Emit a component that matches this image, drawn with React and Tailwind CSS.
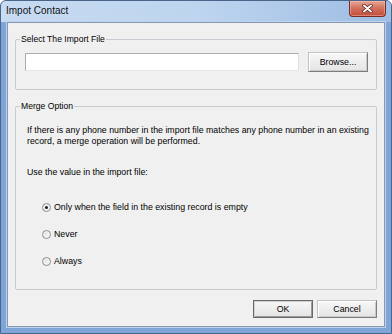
import React from "react";

function Radio({ checked, label }) {
  return (
    <div className="h-[12px] flex items-center">
      <span className="relative w-[9px] h-[9px] rounded-full border border-[#8a8c8e] bg-gradient-to-br from-[#d9dadb] to-[#ffffff] flex items-center justify-center shadow-[inset_0_0_0_1px_#f4f4f4]">
        {checked && <span className="w-[3px] h-[3px] rounded-full bg-[#1e1e1e]" />}
      </span>
      <span className="ml-[3px] text-[8.8px] leading-[12px]">{label}</span>
    </div>
  );
}

function Btn({ children, def, className = "" }) {
  return (
    <div
      className={
        "flex items-center justify-center text-[8.8px] leading-[10px] bg-gradient-to-b from-[#f7f7f7] to-[#e4e4e4] " +
        (def
          ? "border border-[#6a6a6a] shadow-[inset_1px_1px_0_#cfcfcf,inset_-1px_-1px_0_#9a9a9a] "
          : "border border-t-[#c2c2c2] border-l-[#c2c2c2] border-r-[#7d7d7d] border-b-[#7d7d7d] shadow-[inset_1px_1px_0_#ffffff,inset_-1px_-1px_0_#c9c9c9] ") +
        className
      }
    >
      {children}
    </div>
  );
}

export default function App() {
  return (
    <div className="w-[392px] h-[334px] flex flex-col bg-[#7ea4d8] border border-[#4a648a] rounded-t-[6px] overflow-hidden font-['Liberation_Sans',Arial,sans-serif] text-black">
      {/* title bar */}
      <div className="h-[21px] flex items-start justify-between pl-[5px] pr-[5px] bg-gradient-to-r from-[#c7dbf1] via-[#bed5ef] to-[#9dbde3]">
        <span className="mt-[4px] text-[10px] leading-[12px] text-[#111]">Impot Contact</span>
        <div className="w-[37px] h-[16px] rounded-b-[4px] border border-t-0 border-[#7a2a20] bg-gradient-to-b from-[#e7a595] via-[#d0705d] to-[#c34a36] shadow-[inset_0_0_0_1px_rgba(255,200,190,0.45)] flex items-center justify-center">
          <svg width="11" height="9" viewBox="0 0 11 9">
            <path d="M2 1.5 L9 7.5 M9 1.5 L2 7.5" stroke="#5a1a12" strokeWidth="3.4" strokeLinecap="round" />
            <path d="M2 1.5 L9 7.5 M9 1.5 L2 7.5" stroke="#ffffff" strokeWidth="2" strokeLinecap="round" />
          </svg>
        </div>
      </div>

      {/* body */}
      <div className="flex-1 flex px-[6px] pb-[6px]">
        <div className="flex-1 flex flex-col bg-[#f0f0f0] border border-[#8799b2] shadow-[0_0_0_1px_#bdd2ec] px-[7px] pt-[10px]">
          {/* group 1 */}
          <fieldset className="h-[57px] border border-[#c6ccd1] rounded-[2px]">
            <legend className="ml-[4px] px-[1px] text-[8.6px] leading-[12px]">Select The Import File</legend>
            <div className="flex items-center h-[20px] mt-[7px] pl-[9px] pr-[8px] gap-[9px]">
              <div className="flex-1 h-[18px] bg-white border border-[#abadb3] border-b-[#e3e9ef] border-r-[#dbdfe6]" />
              <Btn className="w-[60px] h-[20px]">Browse...</Btn>
            </div>
          </fieldset>

          {/* group 2 */}
          <fieldset className="h-[190px] mt-[10px] border border-[#c6ccd1] rounded-[2px]">
            <legend className="ml-[4px] px-[1px] text-[8.6px] leading-[12px]">Merge Option</legend>
            <div className="pl-[11px] pt-[13px] text-[8.8px] leading-[10.5px]">
              <div className="whitespace-nowrap">If there is any phone number in the import file matches any phone number in an existing</div>
              <div className="whitespace-nowrap">record, a merge operation will be performed.</div>
              <div className="mt-[21px] whitespace-nowrap">Use the value in the import file:</div>
            </div>
            <div className="pl-[26px] mt-[23.5px] flex flex-col gap-[15px]">
              <Radio checked label="Only when the field in the existing record is empty" />
              <Radio label="Never" />
              <Radio label="Always" />
            </div>
          </fieldset>

          {/* buttons */}
          <div className="mt-[10px] flex justify-end gap-[4px]">
            <Btn def className="w-[60px] h-[18px]">OK</Btn>
            <Btn className="w-[60px] h-[18px]">Cancel</Btn>
          </div>
        </div>
      </div>
    </div>
  );
}
